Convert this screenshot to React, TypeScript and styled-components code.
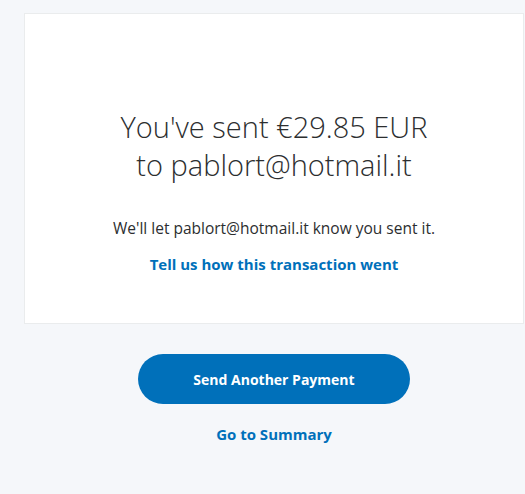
import React from "react";
import styled, { createGlobalStyle } from "styled-components";

const Global = createGlobalStyle`
  html, body {
    margin: 0;
    padding: 0;
    background: #f5f7fa;
  }
  body {
    font-family: "Open Sans", "Noto Sans", sans-serif;
    color: #2c2e2f;
  }
`;

const Page = styled.div`
  width: 500px;
  margin-left: 24px;
  padding-top: 13px;
  display: flex;
  flex-direction: column;
  align-items: center;
`;

const Card = styled.section`
  box-sizing: border-box;
  width: 500px;
  height: 311px;
  background: #ffffff;
  border: 1px solid #eaeced;
  display: flex;
  flex-direction: column;
  align-items: center;
  padding-top: 94px;
`;

const Heading = styled.h1`
  margin: 0;
  font-size: 29px;
  font-weight: 300;
  line-height: 38px;
  text-align: center;
  color: #2c2e2f;
`;

const Note = styled.p`
  margin: 34px 0 0;
  font-size: 15.5px;
  line-height: 21px;
  color: #2c2e2f;
`;

const Link = styled.a<{ $top: number }>`
  display: block;
  margin-top: ${(p) => p.$top}px;
  font-size: 15px;
  font-weight: 700;
  line-height: 20px;
  color: #0070ba;
  text-decoration: none;
  cursor: pointer;
`;

const Button = styled.button`
  margin-top: 30px;
  width: 272px;
  height: 50px;
  border: none;
  border-radius: 25px;
  background: #0070ba;
  color: #ffffff;
  font-family: "Open Sans", "Noto Sans", sans-serif;
  font-size: 14px;
  font-weight: 700;
  cursor: pointer;
`;

export default function App() {
  return (
    <>
      <Global />
      <Page>
        <Card>
          <Heading>
            You've sent €29.85 EUR
            <br />
            to pablort@hotmail.it
          </Heading>
          <Note>We'll let pablort@hotmail.it know you sent it.</Note>
          <Link $top={15}>Tell us how this transaction went</Link>
        </Card>
        <Button>Send Another Payment</Button>
        <Link $top={20}>Go to Summary</Link>
      </Page>
    </>
  );
}
